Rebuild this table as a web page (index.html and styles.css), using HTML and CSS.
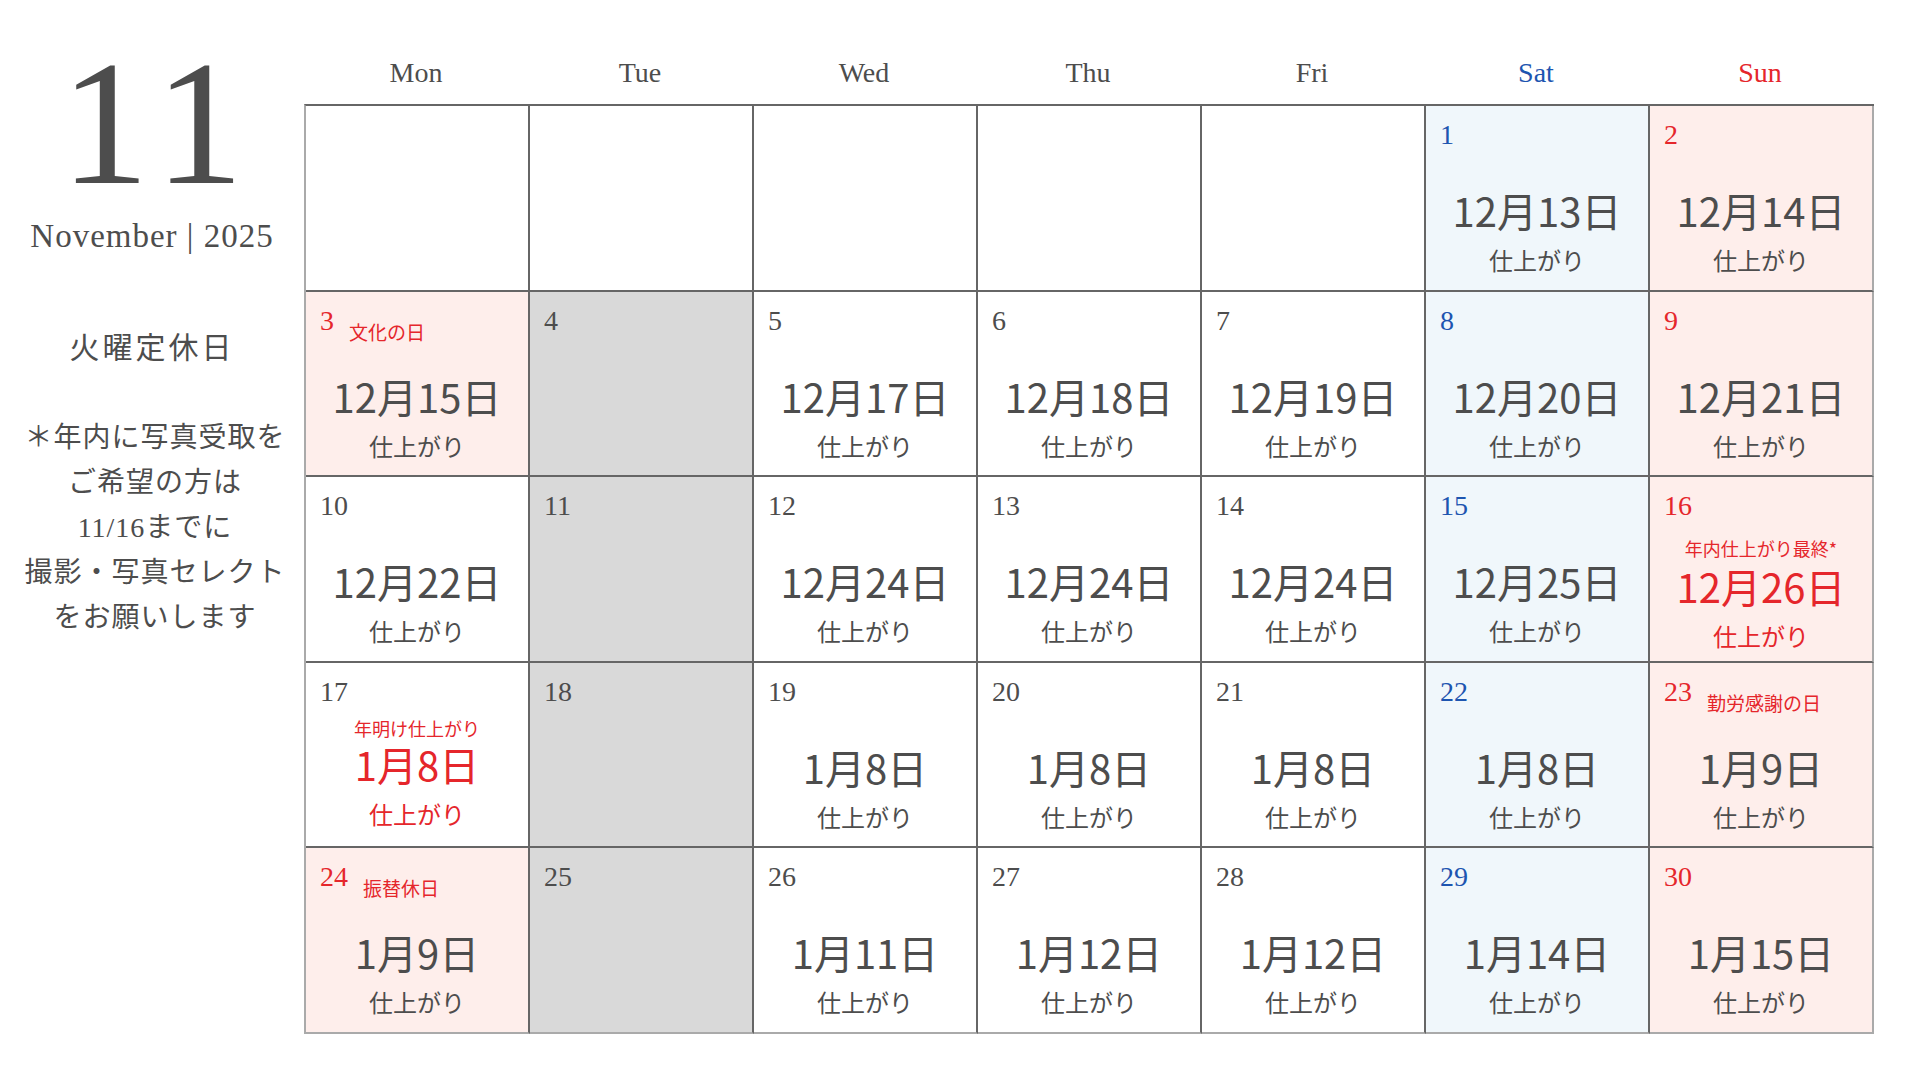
FILE: index.html
```html
<!DOCTYPE html>
<html lang="ja">
<head>
    <meta charset="UTF-8">
    <meta name="viewport" content="width=device-width, initial-scale=1.0">
    <title>2025年11月 仕上がりカレンダー</title>
    <link rel="stylesheet" href="styles.css">
</head>
<body>
    <div class="page">
        <aside class="side">
            <div class="month">11</div>
            <div class="month-name">November | 2025</div>
            <p class="closed-note">火曜定休日</p>
            <p class="notice">＊年内に写真受取を<br>ご希望の方は<br>11/16までに<br>撮影・写真セレクト<br>をお願いします</p>
        </aside>

        <main class="calendar">
            <div class="weekdays">
                <div>Mon</div>
                <div>Tue</div>
                <div>Wed</div>
                <div>Thu</div>
                <div>Fri</div>
                <div class="sat">Sat</div>
                <div class="sun">Sun</div>
            </div>

            <div class="days">
                <!-- week 1 -->
                <div class="day"></div>
                <div class="day"></div>
                <div class="day"></div>
                <div class="day"></div>
                <div class="day"></div>
                <div class="day sat"><div class="num">1</div><div class="due">12月13日</div><div class="done">仕上がり</div></div>
                <div class="day sun"><div class="num">2</div><div class="due">12月14日</div><div class="done">仕上がり</div></div>

                <!-- week 2 -->
                <div class="day sun"><div class="num">3<span class="holiday">文化の日</span></div><div class="due">12月15日</div><div class="done">仕上がり</div></div>
                <div class="day closed"><div class="num">4</div></div>
                <div class="day"><div class="num">5</div><div class="due">12月17日</div><div class="done">仕上がり</div></div>
                <div class="day"><div class="num">6</div><div class="due">12月18日</div><div class="done">仕上がり</div></div>
                <div class="day"><div class="num">7</div><div class="due">12月19日</div><div class="done">仕上がり</div></div>
                <div class="day sat"><div class="num">8</div><div class="due">12月20日</div><div class="done">仕上がり</div></div>
                <div class="day sun"><div class="num">9</div><div class="due">12月21日</div><div class="done">仕上がり</div></div>

                <!-- week 3 -->
                <div class="day"><div class="num">10</div><div class="due">12月22日</div><div class="done">仕上がり</div></div>
                <div class="day closed"><div class="num">11</div></div>
                <div class="day"><div class="num">12</div><div class="due">12月24日</div><div class="done">仕上がり</div></div>
                <div class="day"><div class="num">13</div><div class="due">12月24日</div><div class="done">仕上がり</div></div>
                <div class="day"><div class="num">14</div><div class="due">12月24日</div><div class="done">仕上がり</div></div>
                <div class="day sat"><div class="num">15</div><div class="due">12月25日</div><div class="done">仕上がり</div></div>
                <div class="day sun special last-day"><div class="num">16</div><div class="note">年内仕上がり最終*</div><div class="due">12月26日</div><div class="done">仕上がり</div></div>

                <!-- week 4 -->
                <div class="day special"><div class="num">17</div><div class="note">年明け仕上がり</div><div class="due">1月8日</div><div class="done">仕上がり</div></div>
                <div class="day closed"><div class="num">18</div></div>
                <div class="day"><div class="num">19</div><div class="due">1月8日</div><div class="done">仕上がり</div></div>
                <div class="day"><div class="num">20</div><div class="due">1月8日</div><div class="done">仕上がり</div></div>
                <div class="day"><div class="num">21</div><div class="due">1月8日</div><div class="done">仕上がり</div></div>
                <div class="day sat"><div class="num">22</div><div class="due">1月8日</div><div class="done">仕上がり</div></div>
                <div class="day sun"><div class="num">23<span class="holiday">勤労感謝の日</span></div><div class="due">1月9日</div><div class="done">仕上がり</div></div>

                <!-- week 5 -->
                <div class="day sun"><div class="num">24<span class="holiday">振替休日</span></div><div class="due">1月9日</div><div class="done">仕上がり</div></div>
                <div class="day closed"><div class="num">25</div></div>
                <div class="day"><div class="num">26</div><div class="due">1月11日</div><div class="done">仕上がり</div></div>
                <div class="day"><div class="num">27</div><div class="due">1月12日</div><div class="done">仕上がり</div></div>
                <div class="day"><div class="num">28</div><div class="due">1月12日</div><div class="done">仕上がり</div></div>
                <div class="day sat"><div class="num">29</div><div class="due">1月14日</div><div class="done">仕上がり</div></div>
                <div class="day sun"><div class="num">30</div><div class="due">1月15日</div><div class="done">仕上がり</div></div>
            </div>
        </main>
    </div>
</body>
</html>
```

FILE: styles.css
```css
body {
    margin: 0;
    background-color: #fff;
    color: #4d4d4d;
    font-family: "Liberation Serif", "Noto Sans CJK JP", serif;
}
.page {
    display: flex;
    width: 1920px;
    height: 1080px;
}

/* left column */
.side {
    width: 304px;
    flex: none;
    text-align: center;
}
.month {
    margin-top: 34px;
    font-size: 178px;
    line-height: 178px;
    letter-spacing: 12px;
    text-indent: 12px;
}
.month-name {
    margin-top: 4px;
    font-size: 33px;
    line-height: 40px;
    letter-spacing: 1px;
}
.closed-note {
    margin: 72px 0 0;
    font-size: 30px;
    line-height: 40px;
    letter-spacing: 3px;
}
.notice {
    margin: 47px 0 0;
    padding-left: 6px;
    font-size: 28px;
    line-height: 45px;
    letter-spacing: 1px;
}

/* calendar */
.calendar {
    width: 1570px;
    flex: none;
}
.weekdays {
    display: grid;
    grid-template-columns: repeat(7, 224px);
    height: 104px;
}
.weekdays div {
    display: flex;
    align-items: flex-end;
    justify-content: center;
    padding-bottom: 15px;
    font-size: 28px;
    line-height: 32px;
    box-sizing: border-box;
}
.weekdays .sat { color: #1d55b0; }
.weekdays .sun { color: #e5262b; }

.days {
    display: grid;
    grid-template-columns: repeat(7, 224px);
    grid-auto-rows: 185.5px;
    border-top: 2px solid #666;
    border-left: 2px solid #aaa;
}
.day {
    display: flex;
    flex-direction: column;
    align-items: center;
    box-sizing: border-box;
    padding: 13px 14px 0;
    border-right: 2px solid #666;
    border-bottom: 2px solid #666;
    background-color: #fff;
}
.day:nth-child(7n) {
    border-right-color: #aaa;
}
.day:nth-last-child(-n+7) {
    border-bottom-color: #aaa;
}
.day.sat { background-color: #f0f7fb; }
.day.sun { background-color: #feeeeb; }
.day.closed { background-color: #d9d9d9; }

.num {
    align-self: stretch;
    height: 32px;
    font-size: 28px;
    line-height: 32px;
    white-space: nowrap;
}
.sat .num { color: #1d55b0; }
.sun .num { color: #e5262b; }

.holiday {
    margin-left: 15px;
    font-family: "Noto Sans CJK JP", sans-serif;
    font-size: 19px;
    line-height: 1;
    vertical-align: -10px;
}

.due {
    margin-top: 35px;
    font-family: "Noto Sans CJK JP", sans-serif;
    font-size: 40px;
    line-height: 48px;
    white-space: nowrap;
}
.done {
    margin-top: 11px;
    font-family: "Noto Sans CJK JP", sans-serif;
    font-size: 24px;
    line-height: 30px;
}

/* cells with an extra note above the date */
.note {
    margin-top: 9px;
    font-family: "Noto Sans CJK JP", sans-serif;
    font-size: 18px;
    line-height: 22px;
    color: #e5262b;
    white-space: nowrap;
}
.note + .due {
    margin-top: 1px;
}
.special .due,
.special .done {
    color: #e5262b;
}
.special .num {
    color: #4d4d4d;
}
.special.sun .num {
    color: #e5262b;
}
.last-day .note {
    margin-top: 15px;
}
.last-day .note + .due {
    margin-top: 3px;
}
```
